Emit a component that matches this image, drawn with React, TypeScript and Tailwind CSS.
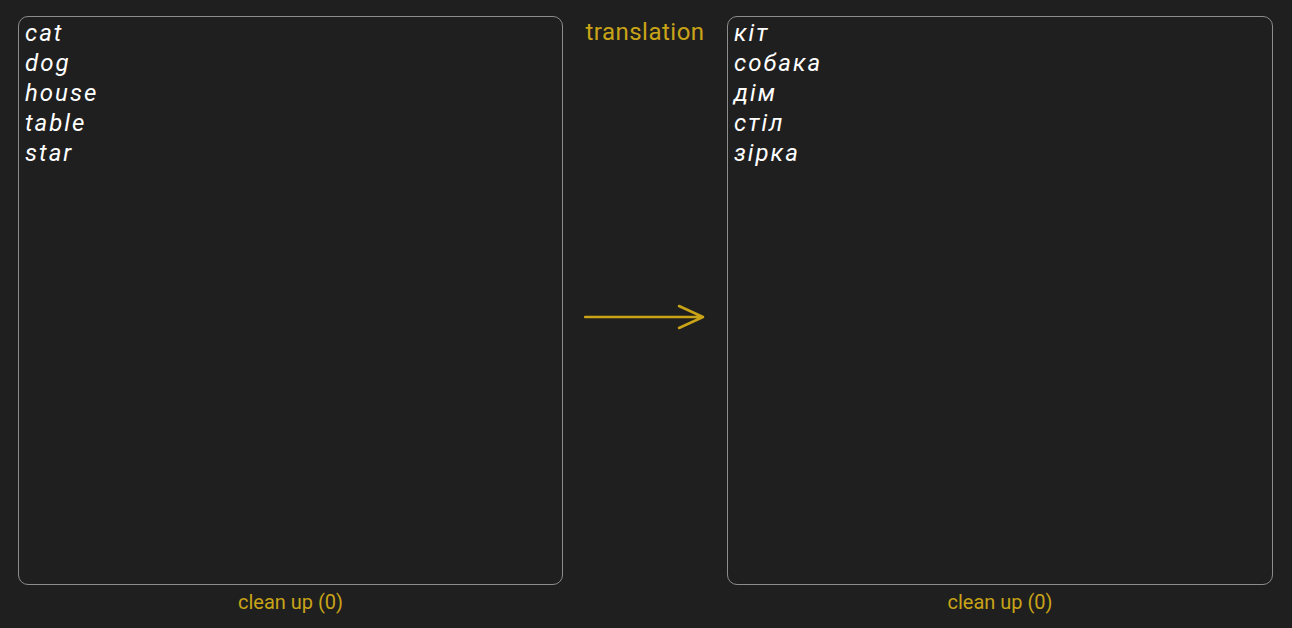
const source = ['cat', 'dog', 'house', 'table', 'star'];
const target = ['кіт', 'собака', 'дім', 'стіл', 'зірка'];

function WordBox({ words, className }: { words: string[]; className: string }) {
  return (
    <div className={`flex flex-col items-center ${className}`}>
      <div className="w-full h-[569px] rounded-[10px] border border-[#8c8c8c] px-[6px] pt-[1px]">
        {words.map((w) => (
          <div key={w} className="text-[24px] leading-[30px] italic tracking-[2px] text-white">
            {w}
          </div>
        ))}
      </div>
      <button className="mt-[4px] text-[20px] leading-[26px] text-[#c9a417]">clean up (0)</button>
    </div>
  );
}

export default function App() {
  return (
    <div
      className="w-[1292px] h-[628px] bg-[#1f1f1f] flex pt-[16px] pl-[18px]"
      style={{ fontFamily: 'Roboto, sans-serif' }}
    >
      <WordBox words={source} className="w-[545px]" />
      <div className="w-[164px] h-[569px] flex flex-col items-center">
        <div className="text-[24px] leading-[32px] tracking-[0.5px] text-[#c9a417]">translation</div>
        <div className="flex-1 flex items-center">
          <svg width="122" height="28" viewBox="0 0 122 28" className="text-[#c9a417]">
            <path d="M1 14 H119 M95 3 L119 14 L95 25" fill="none" stroke="currentColor" strokeWidth="2.5" strokeLinecap="round" strokeLinejoin="round" />
          </svg>
        </div>
      </div>
      <WordBox words={target} className="w-[546px]" />
    </div>
  );
}
